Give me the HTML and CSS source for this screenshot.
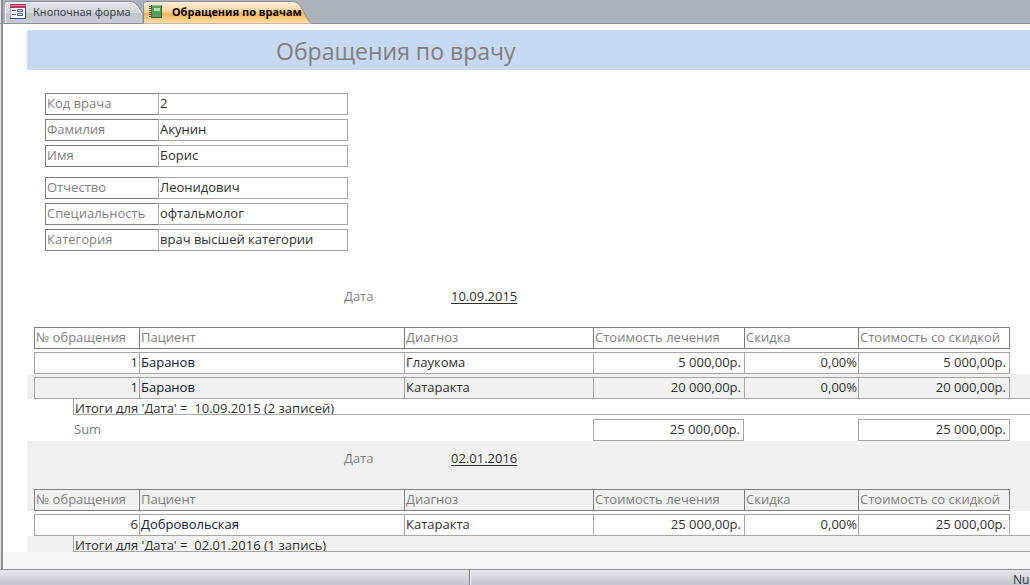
FILE: index.html
```html
<!DOCTYPE html>
<html lang="ru">
<head>
<meta charset="utf-8">
<title>Обращения по врачам</title>
<link rel="stylesheet" href="styles.css">
</head>
<body>
<div class="app">
  <div class="tabs" role="tablist">
    <button class="tab tab-form" role="tab" aria-selected="false">
      <svg class="tab-shape" viewBox="0 0 139 24" preserveAspectRatio="none" aria-hidden="true">
        <defs><linearGradient id="g1" x1="0" y1="0" x2="0" y2="1"><stop offset="0" stop-color="#e3e5e9"/><stop offset=".5" stop-color="#d3d7dc"/><stop offset=".52" stop-color="#c0c5cc"/><stop offset="1" stop-color="#c9cdd3"/></linearGradient></defs>
        <path d="M0 23.500V4.500Q0 1.500 3.500 1.500H126Q131 1.500 134 6L139 14V23.500Z" fill="url(#g1)" stroke="#8b9099"/>
        <path d="M1.500 23V5Q1.500 2.500 4 2.500H126Q130 2.500 132.500 6L138 15" fill="none" stroke="#f1f2f4"/>
      </svg>
      <svg class="icon" viewBox="0 0 16 16" aria-hidden="true">
        <path d="M.5.500h15v14H.5z" fill="#f4f6fb" stroke="#a9b5d0"/>
        <path d="M0 0h16v4H0z" fill="#b93a60"/><path d="M0 1h16v1H0z" fill="#dc7f9b"/>
        <path d="M15.500 4v10.500H0" fill="none" stroke="#35508c"/>
        <path d="M2 6.500h4M2 10.500h4" stroke="#4a5e8c"/>
        <path d="M7.500 5.500h5v2h-5zM7.500 9.500h5v2h-5z" fill="#dfe5f2" stroke="#4a5e8c"/>
      </svg>
      <span>Кнопочная форма</span>
    </button>
    <button class="tab tab-report" role="tab" aria-selected="true">
      <svg class="tab-shape" viewBox="0 0 169 24" preserveAspectRatio="none" aria-hidden="true">
        <defs><linearGradient id="g2" x1="0" y1="0" x2="0" y2="1"><stop offset="0" stop-color="#fdf0e2"/><stop offset=".48" stop-color="#fbcf97"/><stop offset=".52" stop-color="#f9b258"/><stop offset="1" stop-color="#fde0b0"/></linearGradient></defs>
        <path d="M.5 24V4.500Q.5 1.500 3.500 1.500H149Q155 1.500 158 7L164 18Q167 23.500 169 23.500V24Z" fill="url(#g2)" stroke="#8b9099"/>
      </svg>
      <svg class="icon" viewBox="0 0 16 16" aria-hidden="true">
        <path d="M2 1h11v13H2z" fill="#57a05c"/><path d="M2 1h11v1H2z" fill="#92c694"/>
        <path d="M12.500 1v12.500H2" fill="none" stroke="#2e6136"/>
        <path d="M5 4h6v3H5z" fill="#b9dcb8"/><path d="M2.500 1v13" stroke="#3f7b47"/>
        <path d="M0 2.500h3M0 4.500h3M0 6.500h3M0 8.500h3M0 10.500h3M0 12.500h3" stroke="#4f574f"/>
      </svg>
      <span>Обращения по врачам</span>
    </button>
  </div>
  <main class="report">
    <header class="title"><h1>Обращения по врачу</h1></header>
    <dl class="fields">
      <div class="field"><dt>Код врача</dt><dd>2</dd></div>
      <div class="field"><dt>Фамилия</dt><dd>Акунин</dd></div>
      <div class="field"><dt>Имя</dt><dd>Борис</dd></div>
      <div class="field field-spaced"><dt>Отчество</dt><dd>Леонидович</dd></div>
      <div class="field"><dt>Специальность</dt><dd>офтальмолог</dd></div>
      <div class="field"><dt>Категория</dt><dd>врач высшей категории</dd></div>
    </dl>
    <section class="group">
      <div class="date"><span class="date-label">Дата</span><time datetime="2015-09-10">10.09.2015</time></div>
      <table>
        <colgroup><col class="c-id"><col class="c-patient"><col class="c-diag"><col class="c-cost"><col class="c-disc"><col class="c-total"><col></colgroup>
        <thead><tr><th><div>№ обращения</div></th><th><div>Пациент</div></th><th><div>Диагноз</div></th><th><div>Стоимость лечения</div></th><th><div>Скидка</div></th><th><div>Стоимость со скидкой</div></th><td></td></tr></thead>
        <tbody>
          <tr><td class="num"><div>1</div></td><td class="patient"><div>Баранов</div></td><td><div>Глаукома</div></td><td class="num money"><div>5 000,00р.</div></td><td class="num"><div>0,00%</div></td><td class="num money"><div>5 000,00р.</div></td><td></td></tr>
          <tr class="alt"><td class="num"><div>1</div></td><td class="patient"><div>Баранов</div></td><td><div>Катаракта</div></td><td class="num money"><div>20 000,00р.</div></td><td class="num"><div>0,00%</div></td><td class="num money"><div>20 000,00р.</div></td><td></td></tr>
        </tbody>
        <tfoot>
          <tr class="summary"><td colspan="7"><p>Итоги для 'Дата' = &nbsp;10.09.2015 (2 записей)</p></td></tr>
          <tr class="sum"><th colspan="3">Sum</th><td class="num money"><div>25 000,00р.</div></td><td></td><td class="num money"><div>25 000,00р.</div></td><td></td></tr>
        </tfoot>
      </table>
    </section>
    <section class="group shaded">
      <div class="date"><span class="date-label">Дата</span><time datetime="2016-01-02">02.01.2016</time></div>
      <table>
        <colgroup><col class="c-id"><col class="c-patient"><col class="c-diag"><col class="c-cost"><col class="c-disc"><col class="c-total"><col></colgroup>
        <thead><tr><th><div>№ обращения</div></th><th><div>Пациент</div></th><th><div>Диагноз</div></th><th><div>Стоимость лечения</div></th><th><div>Скидка</div></th><th><div>Стоимость со скидкой</div></th><td></td></tr></thead>
        <tbody>
          <tr><td class="num"><div>6</div></td><td class="patient"><div>Добровольская</div></td><td><div>Катаракта</div></td><td class="num money"><div>25 000,00р.</div></td><td class="num"><div>0,00%</div></td><td class="num money"><div>25 000,00р.</div></td><td></td></tr>
        </tbody>
        <tfoot>
          <tr class="summary"><td colspan="7"><p>Итоги для 'Дата' = &nbsp;02.01.2016 (1 запись)</p></td></tr>
        </tfoot>
      </table>
    </section>
  </main>
  <footer class="status"><span class="status-main"></span><span class="status-keys">Num</span></footer>
</div>
</body>
</html>
```
FILE: styles.css
```css
* { box-sizing: border-box; }
body { margin: 0; font: 13px/20px "Open Sans", "Noto Sans", sans-serif; color: #303030; }
.app { height: 100vh; display: flex; flex-direction: column; overflow: hidden; background: #f7f7f7; }

.tabs { flex: none; display: flex; height: 24px; padding-left: 1px; background: #acb1ba; border-left: 3px solid #8f949c; border-bottom: 1px solid #8b9099; }
.tabs, .report { border-left: 0; background-image: linear-gradient(90deg, #e3e5e8 1px, #8b9099 1px, #8b9099 3px, transparent 3px); }
.tabs { padding-left: 4px; }
.tab { position: relative; display: flex; align-items: center; gap: 7px; height: 24px; padding: 0 0 0 6px; border: 0; background: none; font: 11px/16px "Noto Sans", sans-serif; color: #40454d; white-space: nowrap; text-align: left; }
.tab-form { width: 139px; }
.tab-report { width: 169px; font-weight: 700; color: #000; }
.tab-shape { position: absolute; inset: 0; width: 100%; height: 100%; }
.tab .icon, .tab span { position: relative; flex: none; }
.icon { width: 16px; height: 16px; }

.report { flex: 1; min-height: 0; overflow: hidden; padding-left: 3px; display: flex; flex-direction: column; }
.title { flex: none; background: #c6d9f1; border: solid #fff; border-width: 6px 0 0 24px; padding-left: 249px; }
.title h1 { margin: 0; font-size: 23px; line-height: 42px; height: 40px; font-weight: 400; color: #7f7f7f; }
.fields { flex: none; margin: 0; padding: 23px 0 28px 42px; background: #fff; display: flex; flex-direction: column; gap: 4px; }
.field { display: flex; width: 303px; height: 22px; line-height: 19px; }
.field-spaced { margin-top: 6px; }
.field dt { width: 113px; padding-left: 1px; border: 1px solid #7f7f7f; border-right: 0; color: #7f7f7f; }
.field dd { flex: 1; margin: 0; padding-left: 1px; border: 1px solid #a6a6a6; }

.group { flex: none; border-left: 24px solid #fff; background: #fff; }
.date { display: flex; height: 45px; padding: 7px 0 0 317px; }
.date-label { width: 107px; color: #7f7f7f; }
.date time { text-decoration: underline; text-underline-offset: 2px; }
table { width: 100%; table-layout: fixed; border-collapse: collapse; }
.c-id { width: 112px; }
.c-patient { width: 265px; }
.c-diag { width: 189px; }
.c-cost { width: 151px; }
.c-disc { width: 114px; }
.c-total { width: 152px; }
th, td { padding: 3px 0 0; font-weight: 400; text-align: left; white-space: nowrap; line-height: 19px; }
th { color: #7f7f7f; }
td > div, th > div { height: 22px; padding-left: 1px; border: 1px solid #a6a6a6; border-right: 0; }
th > div { border-color: #7f7f7f; }
th:first-child > div, td:first-child > div { margin-left: 7px; }
td:nth-child(6) > div, .sum div { border-right: 1px solid #a6a6a6; }
th:nth-child(6) > div { border-right: 1px solid #7f7f7f; }
.num { text-align: right; }
.num > div { padding-right: 1px; }
.money > div { padding-right: 3px; }
.patient { color: #0f1a35; }
tbody tr { background: #fff; }
.shaded, tbody .alt { background: #f1f1f1; }
.summary td { padding: 0; }
.summary p { height: 17px; margin: -1px 0 0 46px; padding-left: 1px; line-height: 19px; border: 1px solid #a6a6a6; border-right: 0; overflow: hidden; }
.sum td { padding-top: 4px; }
.sum th { padding: 2px 0 0 47px; }

.status { flex: none; display: flex; height: 16px; border-top: 1px solid #8b929c; background: linear-gradient(#e4e8ed, #c3c7cd); color: #33373d; font-size: 12px; line-height: 20px; overflow: hidden; }
.status-main { width: 470px; border-right: 1px solid #7d838c; box-shadow: 1px 0 #eef0f3; }
.status-keys { margin-left: auto; width: 17px; overflow: hidden; }
```
